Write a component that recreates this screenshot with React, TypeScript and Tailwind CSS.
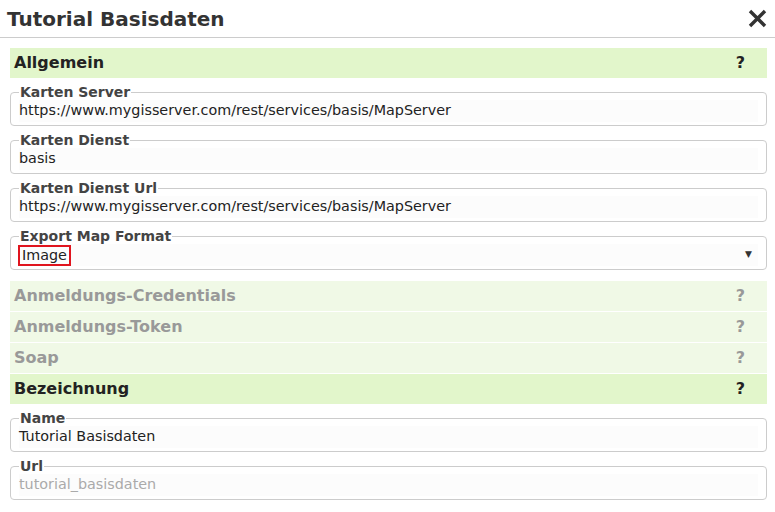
import React from "react";

const font = { fontFamily: '"DejaVu Sans", Verdana, sans-serif' };

function Section({ title, active }: { title: string; active?: boolean }) {
  return (
    <div
      className={`flex h-[30px] items-center justify-between pl-[4px] pr-[22px] text-[16px] font-bold ${
        active ? "bg-[#e2f6cb] text-[#222]" : "bg-[#f0f9e6] text-[#999]"
      }`}
    >
      <span>{title}</span>
      <span>?</span>
    </div>
  );
}

function Field({
  label,
  value,
  placeholder,
  select,
}: {
  label: string;
  value?: string;
  placeholder?: string;
  select?: boolean;
}) {
  return (
    <fieldset className="rounded-[4px] border border-[#cccccc] px-[8px] pb-[3px]">
      <legend className="px-[1px] text-[14px] font-bold leading-[16px] text-[#444]">{label}</legend>
      <div className="flex h-[22px] items-center justify-between bg-[#fcfcfc] text-[14.35px] text-[#222]">
        {select ? (
          <>
            <span className="-ml-[1px] border-2 border-[#e0141e] px-[2px] leading-[17px]">{value}</span>
            <span className="mr-[6px] text-[9px] text-[#333]">▼</span>
          </>
        ) : value ? (
          <span>{value}</span>
        ) : (
          <span className="text-[#aaa]">{placeholder}</span>
        )}
      </div>
    </fieldset>
  );
}

export default function App() {
  return (
    <div className="h-[512px] w-[775px] bg-white" style={font}>
      <div className="flex h-[38px] items-center justify-between border-b border-[#cccccc] pl-[7px] pr-[8px]">
        <span className="text-[20px] font-bold text-[#333]">Tutorial Basisdaten</span>
        <svg width="19" height="19" viewBox="0 0 19 19">
          <path d="M2 2 L17 17 M17 2 L2 17" stroke="#333" strokeWidth="3.4" strokeLinecap="butt" />
        </svg>
      </div>
      <div className="pl-[10px] pr-[8px] pt-[10px]">
        <Section title="Allgemein" active />
        <div className="mt-[6px] flex flex-col gap-[6px]">
          <Field label="Karten Server" value="https://www.mygisserver.com/rest/services/basis/MapServer" />
          <Field label="Karten Dienst" value="basis" />
          <Field label="Karten Dienst Url" value="https://www.mygisserver.com/rest/services/basis/MapServer" />
          <Field label="Export Map Format" value="Image" select />
        </div>
        <div className="mt-[11px] flex flex-col gap-[1px]">
          <Section title="Anmeldungs-Credentials" />
          <Section title="Anmeldungs-Token" />
          <Section title="Soap" />
          <Section title="Bezeichnung" active />
        </div>
        <div className="mt-[6px] flex flex-col gap-[6px]">
          <Field label="Name" value="Tutorial Basisdaten" />
          <Field label="Url" placeholder="tutorial_basisdaten" />
        </div>
      </div>
    </div>
  );
}
